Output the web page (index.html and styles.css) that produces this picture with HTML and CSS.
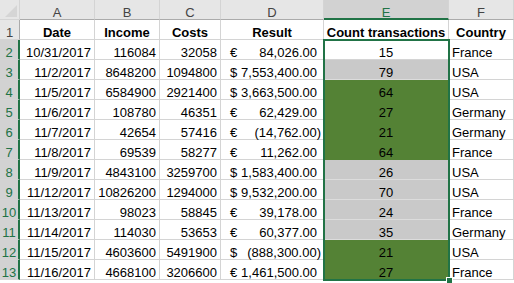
FILE: index.html
```html
<!DOCTYPE html>
<html lang="en">
<head>
    <meta charset="UTF-8">
    <title>Transactions</title>
    <link rel="stylesheet" href="styles.css">
</head>
<body>
    <div class="sheet">
        <div class="grid">
            <div class="hd corner"></div>
            <div class="hd col">A</div>
            <div class="hd col">B</div>
            <div class="hd col">C</div>
            <div class="hd col">D</div>
            <div class="hd col sel">E</div>
            <div class="hd col">F</div>

            <div class="hd row">1</div>
            <div class="c th">Date</div>
            <div class="c th">Income</div>
            <div class="c th">Costs</div>
            <div class="c th">Result</div>
            <div class="c th top-sel">Count transactions</div>
            <div class="c th">Country</div>

            <div class="hd row sel">2</div>
            <div class="c num">10/31/2017</div>
            <div class="c num">116084</div>
            <div class="c num">32058</div>
            <div class="c acc"><span>€</span><span>84,026.00</span></div>
            <div class="c cnt">15</div>
            <div class="c txt">France</div>

            <div class="hd row sel">3</div>
            <div class="c num">11/2/2017</div>
            <div class="c num">8648200</div>
            <div class="c num">1094800</div>
            <div class="c acc"><span>$</span><span>7,553,400.00</span></div>
            <div class="c cnt gray">79</div>
            <div class="c txt">USA</div>

            <div class="hd row sel">4</div>
            <div class="c num">11/5/2017</div>
            <div class="c num">6584900</div>
            <div class="c num">2921400</div>
            <div class="c acc"><span>$</span><span>3,663,500.00</span></div>
            <div class="c cnt green">64</div>
            <div class="c txt">USA</div>

            <div class="hd row sel">5</div>
            <div class="c num">11/6/2017</div>
            <div class="c num">108780</div>
            <div class="c num">46351</div>
            <div class="c acc"><span>€</span><span>62,429.00</span></div>
            <div class="c cnt green">27</div>
            <div class="c txt">Germany</div>

            <div class="hd row sel">6</div>
            <div class="c num">11/7/2017</div>
            <div class="c num">42654</div>
            <div class="c num">57416</div>
            <div class="c acc neg"><span>€</span><span>(14,762.00)</span></div>
            <div class="c cnt green">21</div>
            <div class="c txt">Germany</div>

            <div class="hd row sel">7</div>
            <div class="c num">11/8/2017</div>
            <div class="c num">69539</div>
            <div class="c num">58277</div>
            <div class="c acc"><span>€</span><span>11,262.00</span></div>
            <div class="c cnt green">64</div>
            <div class="c txt">France</div>

            <div class="hd row sel">8</div>
            <div class="c num">11/9/2017</div>
            <div class="c num">4843100</div>
            <div class="c num">3259700</div>
            <div class="c acc"><span>$</span><span>1,583,400.00</span></div>
            <div class="c cnt gray">26</div>
            <div class="c txt">USA</div>

            <div class="hd row sel">9</div>
            <div class="c num">11/12/2017</div>
            <div class="c num">10826200</div>
            <div class="c num">1294000</div>
            <div class="c acc"><span>$</span><span>9,532,200.00</span></div>
            <div class="c cnt gray">70</div>
            <div class="c txt">USA</div>

            <div class="hd row sel">10</div>
            <div class="c num">11/13/2017</div>
            <div class="c num">98023</div>
            <div class="c num">58845</div>
            <div class="c acc"><span>€</span><span>39,178.00</span></div>
            <div class="c cnt gray">24</div>
            <div class="c txt">France</div>

            <div class="hd row sel">11</div>
            <div class="c num">11/14/2017</div>
            <div class="c num">114030</div>
            <div class="c num">53653</div>
            <div class="c acc"><span>€</span><span>60,377.00</span></div>
            <div class="c cnt gray">35</div>
            <div class="c txt">Germany</div>

            <div class="hd row sel">12</div>
            <div class="c num">11/15/2017</div>
            <div class="c num">4603600</div>
            <div class="c num">5491900</div>
            <div class="c acc neg"><span>$</span><span>(888,300.00)</span></div>
            <div class="c cnt green">21</div>
            <div class="c txt">USA</div>

            <div class="hd row sel">13</div>
            <div class="c num">11/16/2017</div>
            <div class="c num">4668100</div>
            <div class="c num">3206600</div>
            <div class="c acc"><span>€</span><span>1,461,500.00</span></div>
            <div class="c cnt green">27</div>
            <div class="c txt">France</div>
        </div>

        <!-- selected range E2:E13 -->
        <div class="selection"></div>
        <div class="fill-handle"></div>
    </div>
</body>
</html>
```

FILE: styles.css
```css
body {
    margin: 0;
    background: #fff;

    font-family: "Liberation Sans", Arial, sans-serif;
    font-size: 13px;
    color: #000;
}

.sheet {
    position: relative;
    width: 514px;
    height: 283px;
    overflow: hidden;
}

.grid {
    display: grid;
    grid-template-columns: 20px 75px 65px 61px 103px 125px 65px;
    grid-auto-rows: 20px;
}

.grid > div {
    box-sizing: border-box;
    border-right: 1px solid #d4d4d4;
    border-bottom: 1px solid #d4d4d4;

    line-height: 25px;
    white-space: nowrap;
}

/* headers */
.hd {
    background: #e6e6e6;
    color: #444;
    text-align: center;
}

.grid > .col {
    border-bottom-color: #ababab;
}

.grid > .row {
    border-right-color: #ababab;
}

.corner {
    position: relative;
}

.corner::after {
    content: '';
    position: absolute;
    right: 2px;
    bottom: 2px;
    border-left: 12px solid transparent;
    border-bottom: 12px solid #d5d5d5;
}

.grid > .col.sel {
    background: #d2d2d2;
    color: #217346;
    border-bottom: 2px solid #217346;
}

.grid > .row.sel {
    background: #d2d2d2;
    color: #217346;
    border-right: 2px solid #217346;
}

/* cells */
.th {
    font-weight: bold;
    text-align: center;
}

.num {
    padding-right: 3px;
    text-align: right;
}

.txt {
    padding-left: 3px;
}

.cnt {
    text-align: center;
}

.acc {
    display: flex;
    justify-content: space-between;
    padding: 0 6px 0 9px;
}

.acc.neg {
    padding-right: 2px;
}

.grid > .gray {
    background: #c9c9c9;
    border-bottom-color: #dcdcdc;
}

.grid > .green {
    background: #548235;
    border-bottom-color: #548235;
}

/* selection */
.selection {
    position: absolute;
    left: 323px;
    top: 39px;
    width: 127px;
    height: 242px;
    box-sizing: border-box;

    border: 2px solid #217346;
}

.fill-handle {
    position: absolute;
    left: 446px;
    top: 277px;
    width: 5px;
    height: 5px;

    background: #217346;
    border: 1px solid #fff;
}
```
